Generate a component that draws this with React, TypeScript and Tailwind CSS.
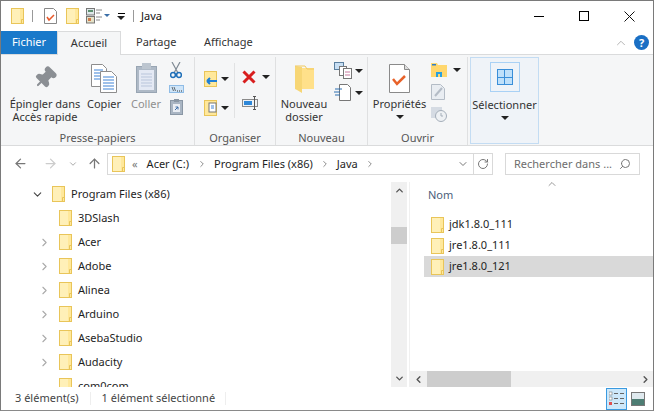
import { ArrowLeft, ArrowRight, ArrowUp, ChevronDown, ChevronRight, ChevronUp, ChevronLeft, Search, RotateCw, Pin } from "lucide-react";

const fontStack = "font-['Noto_Sans','Open_Sans',sans-serif]";

function Folder({ className = "" }: { className?: string }) {
  return (
    <svg width="13" height="16" viewBox="0 0 13 16" className={`shrink-0 ${className}`}>
      <rect x="0.5" y="0.5" width="12" height="15" fill="#ffe89b" stroke="#e9c559" />
      <rect x="1" y="1" width="8" height="14" fill="#fff0b8" />
      <path d="M10.5 15.5v-4h2" fill="none" stroke="#e9c559" />
    </svg>
  );
}

function Caret({ className = "" }: { className?: string }) {
  return <span className={`inline-block h-0 w-0 border-x-[4px] border-t-[4px] border-x-transparent border-t-[#222] ${className}`} />;
}

function CopyIcon() {
  return (
    <svg width="26" height="29" viewBox="0 0 26 29">
      <path d="M.5.5h11l4 4v18H.5z" fill="#fff" stroke="#8d8d8d" />
      <path d="M3 6h9M3 9h9M3 12h9M3 15h9" stroke="#3f83d6" />
      <path d="M9.5 7.5h11l5 5v16h-16z" fill="#fff" stroke="#8d8d8d" />
      <path d="M12 13h11M12 16h11M12 19h11M12 22h11M12 25h11" stroke="#3f83d6" />
    </svg>
  );
}

function PasteIcon() {
  return (
    <svg width="21" height="30" viewBox="0 0 21 30">
      <rect x=".5" y="3.5" width="20" height="26" fill="#aeb9c6" stroke="#98a5b3" />
      <rect x="3" y="7" width="15" height="20" fill="#e4e9f4" />
      <path d="M5 11h11M5 14h11M5 17h11M5 20h11M5 23h11" stroke="#b9c5db" />
      <rect x="6" y="0" width="9" height="6" fill="#bcc5cf" />
    </svg>
  );
}

function BigButton({ label, icon, className = "", muted = false, caret = false }: { label: React.ReactNode; icon: React.ReactNode; className?: string; muted?: boolean; caret?: boolean }) {
  return (
    <div className={`flex flex-col items-center pt-[3px] ${className}`}>
      <div className="flex h-[33px] items-end justify-center">{icon}</div>
      <div className={`mt-[4px] text-center text-[11px] leading-[13px] whitespace-nowrap ${muted ? "text-[#8f8f8f]" : "text-[#333]"}`}>{label}</div>
      {caret && <Caret className="mt-[5px]" />}
    </div>
  );
}

function Group({ label, width, children }: { label: string; width: string; children: React.ReactNode }) {
  return (
    <div className={`flex h-[88px] shrink-0 flex-col border-r border-[#dfe0e1] ${width}`}>
      <div className="flex h-[73px]">{children}</div>
      <div className="text-center text-[11px] leading-[15px] text-[#555]">{label}</div>
    </div>
  );
}

const treeRows = [
  { name: "3DSlash", chevron: false },
  { name: "Acer", chevron: true },
  { name: "Adobe", chevron: true },
  { name: "Alinea", chevron: true },
  { name: "Arduino", chevron: true },
  { name: "AsebaStudio", chevron: true },
  { name: "Audacity", chevron: true },
  { name: "com0com", chevron: false },
];

export default function App() {
  return (
    <div className={`flex h-[411px] w-[654px] flex-col overflow-hidden border border-[#7a7a7a] border-b-[#8a8a8a] bg-white text-[11px] text-[#1e1e1e] ${fontStack}`}>
      {/* title bar */}
      <div className="flex h-[30px] shrink-0 items-center">
        <Folder className="ml-[10px]" />
        <div className="ml-[8px] h-[12px] w-px bg-[#999]" />
        <svg width="13" height="16" viewBox="0 0 13 16" className="ml-[11px]">
          <path d="M.5.5h9l3 3v12H.5z" fill="#fff" stroke="#888" />
          <path d="M3 9l2 3 5-5" fill="none" stroke="#e8592a" strokeWidth="1.5" />
        </svg>
        <Folder className="ml-[9px]" />
        <svg width="20" height="16" viewBox="0 0 20 16" className="ml-[7px]">
          <rect x=".5" y=".5" width="8" height="6.5" fill="#dfe8ea" stroke="#777" />
          <rect x="2" y="2" width="5" height="2" fill="#5c8f6e" />
          <rect x=".5" y="8.5" width="8" height="6.5" fill="#e5e2c8" stroke="#777" />
          <rect x="2" y="10" width="3" height="3" fill="#cf7a4a" />
          <path d="M10 2h6M10 5h4M10 9h6M10 12h4" stroke="#888" />
        </svg>
        <span className="ml-[-2px] mt-[-1px] h-0 w-0 border-x-[3px] border-t-[3px] border-x-transparent border-t-[#3b6fa8]" />
        <div className="ml-[7px] flex flex-col items-center gap-[2px]">
          <div className="h-px w-[7px] bg-black" />
          <Caret className="border-x-[3.5px]" />
        </div>
        <div className="ml-[8px] h-[12px] w-px bg-[#999]" />
        <span className="ml-[7px] text-[#111]">Java</span>
        <div className="ml-auto flex items-center">
          <div className="mr-[35px] h-px w-[10px] bg-black" />
          <div className="mr-[35px] h-[10px] w-[10px] border border-black" />
          <svg width="11" height="11" viewBox="0 0 11 11" className="mr-[18px]">
            <path d="M.5.5l10 10M10.5.5l-10 10" stroke="#111" />
          </svg>
        </div>
      </div>

      {/* tabs */}
      <div className="flex h-[23px] shrink-0 items-stretch">
        <div className="flex w-[56px] items-center justify-center bg-[#1979ca] text-white">Fichier</div>
        <div className="relative z-10 flex h-[24px] w-[64px] items-center justify-center border-x border-t border-[#dadbdc] bg-[#f5f6f7] text-[#333]">Accueil</div>
        <div className="ml-[15px] flex w-[40px] items-center text-[#333]">Partage</div>
        <div className="ml-[28px] flex items-center text-[#333]">Affichage</div>
        <ChevronUp size={14} strokeWidth={1.5} className="ml-auto mr-[6px] self-center text-[#aaa]" />
        <div className="mr-[4px] flex h-[15px] w-[15px] items-center justify-center self-center rounded-full bg-[#1a6fc4] text-[11px] leading-none font-bold text-white">?</div>
      </div>

      {/* ribbon */}
      <div className="flex h-[92px] shrink-0 items-start border-y border-[#dadbdc] bg-[#f5f6f7] pt-[2px]">
        <Group label="Presse-papiers" width="w-[194px]">
          <BigButton label={<>Épingler dans<br />Accès rapide</>} className="ml-[8px] w-[72px]" icon={<Pin size={24} fill="#8b8f94" stroke="#8b8f94" className="mb-[3px] rotate-45" />} />
          <BigButton label="Copier" className="ml-[6px] w-[34px]" icon={<CopyIcon />} />
          <BigButton label="Coller" muted className="ml-[8px] w-[34px]" icon={<PasteIcon />} />
          <div className="ml-[5px] flex w-[16px] flex-col items-center gap-[6px] pt-[5px]">
            <svg width="12" height="17" viewBox="0 0 12 17">
              <path d="M2 0l6 11M10 0L4 11" stroke="#7f8a94" strokeWidth="1.2" fill="none" />
              <circle cx="3" cy="13" r="2.4" fill="none" stroke="#1f6fb8" strokeWidth="1.5" />
              <circle cx="9" cy="13" r="2.4" fill="none" stroke="#1f6fb8" strokeWidth="1.5" />
            </svg>
            <svg width="15" height="8" viewBox="0 0 15 8">
              <rect x=".5" y=".5" width="14" height="7" fill="#cfe5f8" stroke="#8fbce6" />
              <path d="M3 2l1.5 4M5 2l1.5 4" stroke="#333" strokeWidth=".7" />
              <path d="M8 6h1M10 6h1M12 6h1" stroke="#333" />
            </svg>
            <svg width="13" height="16" viewBox="0 0 13 16">
              <rect x=".5" y="1.5" width="12" height="14" fill="#a9b5c3" stroke="#8a97a5" />
              <rect x="4" y="0" width="5" height="3" fill="#8a97a5" />
              <rect x="3" y="5" width="7" height="8" fill="#e9edf3" />
              <path d="M5 11l3-3M5.5 8H8v2.5" fill="none" stroke="#3f6fa8" />
            </svg>
          </div>
        </Group>

        <Group label="Organiser" width="w-[81px]">
          <div className="ml-[9px] flex w-[28px] flex-col gap-[13px] pt-[14px]">
            <div className="flex items-center gap-[4px]">
              <svg width="13" height="16" viewBox="0 0 13 16"><rect x=".5" y=".5" width="12" height="15" fill="#ffe89b" stroke="#e9c559" /><path d="M3 10h10M3 10l3-3M3 10l3 3" stroke="#1f7fd6" strokeWidth="2" fill="none" /></svg>
              <Caret />
            </div>
            <div className="flex items-center gap-[4px]">
              <svg width="13" height="16" viewBox="0 0 13 16"><rect x=".5" y=".5" width="12" height="15" fill="#ffe89b" stroke="#e9c559" /><rect x="5" y="3" width="7" height="9" fill="#fff" stroke="#777" /><path d="M7 6h3M7 8h3" stroke="#3f83d6" /></svg>
              <Caret />
            </div>
          </div>
          <div className="ml-[2px] mt-[6px] h-[55px] w-px bg-[#e1e2e3]" />
          <div className="ml-[7px] flex flex-col gap-[12px] pt-[13px]">
            <div className="flex items-center gap-[6px]">
              <svg width="14" height="14" viewBox="0 0 14 14"><path d="M1.5 1.5l11 11M12.5 1.5l-11 11" stroke="#d81e1e" strokeWidth="3" /></svg>
              <Caret />
            </div>
            <svg width="16" height="14" viewBox="0 0 16 14"><rect x=".5" y="3.5" width="15" height="7" fill="#eef2f6" stroke="#8a8a8a" /><rect x="2" y="5" width="8" height="4" fill="#2d87d8" /><path d="M11 .5h3M12.5.5v13M11 13.5h3" stroke="#555" /></svg>
          </div>
        </Group>

        <Group label="Nouveau" width="w-[92px]">
          <BigButton label={<>Nouveau<br />dossier</>} className="ml-[3px] w-[50px]" icon={
            <svg width="19" height="28" viewBox="0 0 19 28">
              <path d="M0 1l7 1v26L2 25 0 24z" fill="#f7d675" />
              <path d="M7 3h12v21H7z" fill="#ffe08a" />
              <path d="M0 1h10l2 3h7" fill="none" stroke="#f0c95f" />
            </svg>
          } />
          <div className="ml-[5px] flex flex-col gap-[5px] pt-[5px]">
            <div className="flex items-center gap-[3px]">
              <svg width="18" height="17" viewBox="0 0 18 17"><rect x=".5" y=".5" width="9" height="7" fill="#c8dff4" stroke="#5a7f9f" /><rect x="5.5" y="4.5" width="7" height="9" fill="#fff" stroke="#777" /><rect x="9.5" y="6.5" width="8" height="10" fill="#fff" stroke="#777" /><path d="M11 10h5M11 13h5" stroke="#c97aa0" /></svg>
              <Caret />
            </div>
            <div className="flex items-center gap-[3px]">
              <svg width="18" height="17" viewBox="0 0 18 17"><path d="M5.5.5h8l3 3v13h-11z" fill="#fff" stroke="#777" /><path d="M1 5h7M0 8h6M1 11h5" stroke="#2d6fb0" /></svg>
              <Caret />
            </div>
          </div>
        </Group>

        <Group label="Ouvrir" width="w-[100px]">
          <BigButton label="Propriétés" caret className="ml-[4px] w-[55px]" icon={
            <svg width="21" height="29" viewBox="0 0 21 29">
              <path d="M.5.5h15l5 5v23H.5z" fill="#fff" stroke="#8a8a8a" />
              <path d="M15.5.5v5h5" fill="#ddd" stroke="#8a8a8a" />
              <path d="M4 15l4 5 8-8" fill="none" stroke="#e8622a" strokeWidth="2.5" />
            </svg>
          } />
          <div className="ml-[4px] flex flex-col gap-[7px] pt-[6px]">
            <div className="flex items-center gap-[6px]">
              <svg width="16" height="14" viewBox="0 0 16 14"><path d="M0 0h6l1 2h9v12H0z" fill="#ffd76e" /><path d="M5 14V9h6v5h-2v-3H7v3z" fill="#28a0e0" /><rect x="1" y="1" width="4" height="1.5" fill="#2f7fc8" /></svg>
              <Caret />
            </div>
            <svg width="14" height="16" viewBox="0 0 14 16"><path d="M.5.5h9l4 4v11H.5z" fill="#e9edf2" stroke="#b4bcc6" /><path d="M4 12l7-8" stroke="#b4bcc6" strokeWidth="2" /></svg>
            <svg width="16" height="15" viewBox="0 0 16 15"><rect x="0" y="0" width="11" height="11" fill="#d5dbe3" /><circle cx="10" cy="9" r="5.5" fill="#eef1f4" stroke="#a4aeb9" /><path d="M10 6v3h2" stroke="#a4aeb9" fill="none" /></svg>
          </div>
        </Group>

        <div className="ml-[2px] flex h-[87px] w-[69px] shrink-0 flex-col items-center border border-[#c3dcf3] bg-[#eff3f8]">
          <div className="mt-[4px] flex h-[30px] w-[30px] items-center justify-center border border-[#a9d1f5]">
            <div className="grid h-[16px] w-[16px] grid-cols-2 gap-[1px] border border-[#3a8ed8] bg-[#3a8ed8]">
              <div className="bg-[#bfe0fa]" />
              <div className="bg-[#bfe0fa]" />
              <div className="bg-[#bfe0fa]" />
              <div className="bg-[#bfe0fa]" />
            </div>
          </div>
          <div className="mt-[6px] text-[11px] leading-[13px] text-[#333]">Sélectionner</div>
          <Caret className="mt-[5px]" />
        </div>
      </div>

      {/* navigation */}
      <div className="flex h-[36px] shrink-0 items-start pt-[7px]">
        <ArrowLeft size={15} strokeWidth={2} className="ml-[12px] mt-[3px] text-[#777]" />
        <ArrowRight size={15} strokeWidth={2} className="ml-[15px] mt-[3px] text-[#ccc]" />
        <ChevronDown size={10} strokeWidth={2} className="ml-[10px] mt-[6px] text-[#999]" />
        <ArrowUp size={15} strokeWidth={2} className="ml-[9px] mt-[3px] text-[#777]" />
        <div className="ml-[5px] flex h-[22px] w-[386px] items-center border border-[#d9d9d9]">
          <Folder className="ml-[4px]" />
          <span className="ml-[7px] text-[#777]">«</span>
          <span className="ml-[9px]">Acer (C:)</span>
          <ChevronRight size={10} strokeWidth={2} className="ml-[8px] text-[#777]" />
          <span className="ml-[7px]">Program Files (x86)</span>
          <ChevronRight size={10} strokeWidth={2} className="ml-[7px] text-[#777]" />
          <span className="ml-[7px]">Java</span>
          <ChevronRight size={10} strokeWidth={2} className="ml-[7px] text-[#777]" />
          <ChevronDown size={12} strokeWidth={2} className="ml-auto mr-[4px] text-[#777]" />
          <div className="flex h-full w-[19px] items-center justify-center border-l border-[#d9d9d9]">
            <RotateCw size={12} strokeWidth={2} className="text-[#777]" />
          </div>
        </div>
        <div className="ml-[12px] flex h-[22px] w-[135px] items-center border border-[#d9d9d9] pl-[8px] whitespace-nowrap text-[#6d6d6d]">
          Rechercher dans ...
          <Search size={12} strokeWidth={2} className="ml-auto mr-[8px] -scale-x-100 text-[#777]" />
        </div>
      </div>

      {/* panes */}
      <div className="flex h-[205px] shrink-0">
        <div className="flex h-full w-[390px] shrink-0 flex-col overflow-hidden">
          <div className="flex h-[24px] shrink-0 items-center">
            <ChevronDown size={13} strokeWidth={2} className="ml-[30px] text-[#444]" />
            <Folder className="ml-[8px]" />
            <span className="ml-[6px]">Program Files (x86)</span>
          </div>
          {treeRows.map((row) => (
            <div key={row.name} className="flex h-[24px] shrink-0 items-center pl-[37px]">
              <div className="w-[21px] shrink-0">
                {row.chevron && <ChevronRight size={13} strokeWidth={2} className="text-[#aaa]" />}
              </div>
              <Folder />
              <span className="ml-[6px]">{row.name}</span>
            </div>
          ))}
        </div>

        <div className="flex h-full w-[16px] shrink-0 flex-col items-center bg-[#f0f0f0]">
          <ChevronUp size={11} strokeWidth={3} className="mt-[3px] text-[#555]" />
          <div className="mt-[31px] h-[17px] w-full bg-[#cdcdcd]" />
          <ChevronDown size={11} strokeWidth={3} className="mt-auto mb-[3px] text-[#555]" />
        </div>

        <div className="ml-[2px] flex min-w-0 flex-1 flex-col border-l border-[#f0f0f0]">
          <div className="flex h-[189px] flex-col">
            <div className="flex h-[5px] justify-center pl-[40px]">
              <ChevronUp size={12} strokeWidth={1.5} className="mt-[-4px] h-[12px] shrink-0 text-[#777]" />
            </div>
            <div className="ml-[18px] text-[11px] leading-[16px] text-[#4c607a]">Nom</div>
            <div className="mt-[11px] flex flex-col pl-[14px]">
              {["jdk1.8.0_111", "jre1.8.0_111", "jre1.8.0_121"].map((name, i) => (
                <div key={name} className={`flex h-[21px] items-center pl-[7px] ${i === 2 ? "bg-[#d9d9d9]" : ""}`}>
                  <Folder />
                  <span className="ml-[5px]">{name}</span>
                </div>
              ))}
            </div>
          </div>
          <div className="flex h-[16px] items-center bg-[#f0f0f0]">
            <ChevronLeft size={11} strokeWidth={3} className="ml-[3px] text-[#555]" />
            <div className="ml-[3px] h-full w-[84px] bg-[#cdcdcd]" />
            <ChevronRight size={11} strokeWidth={3} className="ml-auto mr-[2px] text-[#555]" />
          </div>
        </div>
      </div>

      {/* status bar */}
      <div className="flex min-h-0 flex-1 items-center text-[#444]">
        <span className="ml-[14px]">3 élément(s)</span>
        <div className="ml-[11px] h-[13px] w-px bg-[#eee]" />
        <span className="ml-[11px]">1 élément sélectionné</span>
        <div className="ml-[10px] h-[13px] w-px bg-[#eee]" />
        <div className="ml-auto mr-[4px] flex h-[22px] w-[21px] items-center justify-center border border-[#3a9ae0] bg-[#cde8fa]">
          <svg width="15" height="15" viewBox="0 0 15 15">
            <rect x="0" y="1" width="3" height="3" fill="#fff" stroke="#666" strokeWidth=".5" />
            <rect x="0" y="6" width="3" height="3" fill="#fff" stroke="#666" strokeWidth=".5" />
            <rect x="0" y="11" width="3" height="3" fill="#e05050" />
            <path d="M5 2.5h4M11 2.5h4M5 7.5h4M11 7.5h4M5 12.5h4M11 12.5h4" stroke="#666" />
          </svg>
        </div>
        <div className="mr-[8px] flex h-[14px] w-[14px] flex-col border border-[#777] bg-[#dfe9ee]">
          <div className="mt-auto h-[6px] bg-[#4d7d73]" />
        </div>
      </div>
    </div>
  );
}
